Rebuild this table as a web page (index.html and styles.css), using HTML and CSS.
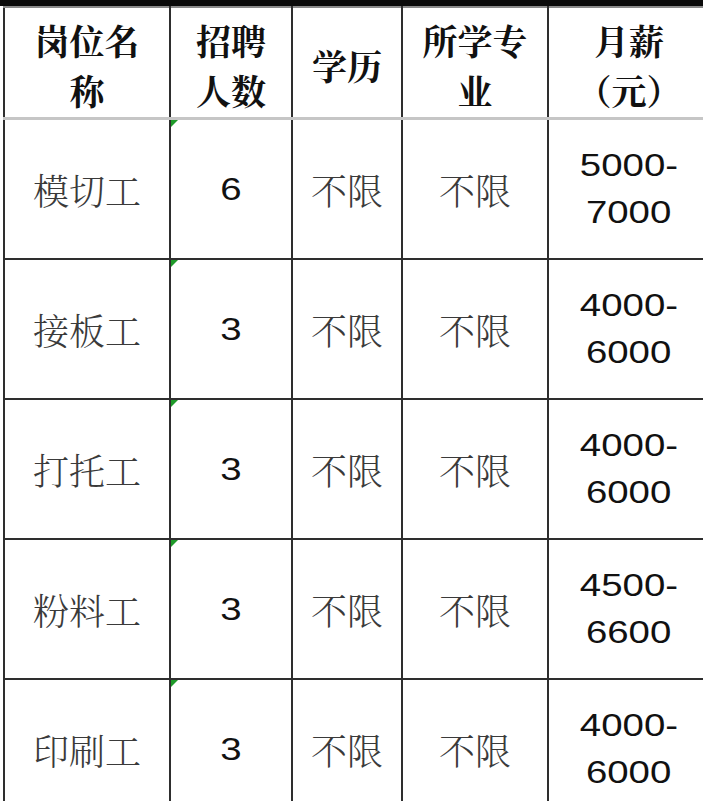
FILE: index.html
```html
<!DOCTYPE html>
<html lang="zh-CN">
<head>
<meta charset="utf-8">
<title>招聘岗位</title>
<link rel="stylesheet" href="styles.css">
</head>
<body>
<div class="topbar"></div>
<table class="jobs">
  <colgroup>
    <col class="c1"><col class="c2"><col class="c3"><col class="c4"><col class="c5">
  </colgroup>
  <thead>
    <tr>
      <th>岗位名<br>称</th>
      <th>招聘<br>人数</th>
      <th>学历</th>
      <th>所学专<br>业</th>
      <th>月薪<br>（元）</th>
    </tr>
  </thead>
  <tbody>
    <tr>
      <td class="cn">模切工</td>
      <td class="num mark"><span class="d">6</span></td>
      <td class="cn">不限</td>
      <td class="cn">不限</td>
      <td class="num"><span class="d">5000-</span><br><span class="d">7000</span></td>
    </tr>
    <tr>
      <td class="cn">接板工</td>
      <td class="num mark"><span class="d">3</span></td>
      <td class="cn">不限</td>
      <td class="cn">不限</td>
      <td class="num"><span class="d">4000-</span><br><span class="d">6000</span></td>
    </tr>
    <tr>
      <td class="cn">打托工</td>
      <td class="num mark"><span class="d">3</span></td>
      <td class="cn">不限</td>
      <td class="cn">不限</td>
      <td class="num"><span class="d">4000-</span><br><span class="d">6000</span></td>
    </tr>
    <tr>
      <td class="cn">粉料工</td>
      <td class="num mark"><span class="d">3</span></td>
      <td class="cn">不限</td>
      <td class="cn">不限</td>
      <td class="num"><span class="d">4500-</span><br><span class="d">6600</span></td>
    </tr>
    <tr>
      <td class="cn">印刷工</td>
      <td class="num mark"><span class="d">3</span></td>
      <td class="cn">不限</td>
      <td class="cn">不限</td>
      <td class="num"><span class="d">4000-</span><br><span class="d">6000</span></td>
    </tr>
  </tbody>
</table>
</body>
</html>
```

FILE: styles.css
```css
html, body {
  margin: 0;
  padding: 0;
  background: #ffffff;
  overflow: hidden;
  width: 703px;
  height: 801px;
}

.topbar {
  height: 6px;
  background: #0a0a0a;
}

.jobs {
  border-collapse: collapse;
  table-layout: fixed;
  width: 706px;
  margin-left: 3px;
  font-family: "Noto Serif CJK SC", "Noto Sans CJK SC", serif;
}

.c1 { width: 166px; }
.c2 { width: 122px; }
.c3 { width: 110px; }
.c4 { width: 146px; }
.c5 { width: 162px; }

.jobs th,
.jobs td {
  border-left: 2px solid #2e2e2e;
  border-right: 2px solid #2e2e2e;
  text-align: center;
  vertical-align: middle;
  padding: 0;
}

.jobs thead th {
  border-top: 2px solid #8a8a8a;
  border-bottom: 3px solid #c6c6c6;
  height: 105px;
  font-size: 35px;
  font-weight: 700;
  line-height: 50px;
  color: #111111;
  padding-top: 4px;
}

.jobs tbody td {
  border-bottom: 2px solid #2e2e2e;
  height: 138px;
  position: relative;
}

.cn {
  font-size: 36px;
  font-weight: 300;
  color: #3a3a3a;
}

.num {
  font-family: "Liberation Sans", Arial, sans-serif;
  font-size: 32px;
  line-height: 47px;
  color: #111111;
}

.d {
  display: inline-block;
  transform: scaleX(1.2);
}

.mark::before {
  content: "";
  position: absolute;
  left: 0;
  top: 0;
  width: 0;
  height: 0;
  border-top: 7px solid #1f9a2a;
  border-right: 7px solid transparent;
}
```
